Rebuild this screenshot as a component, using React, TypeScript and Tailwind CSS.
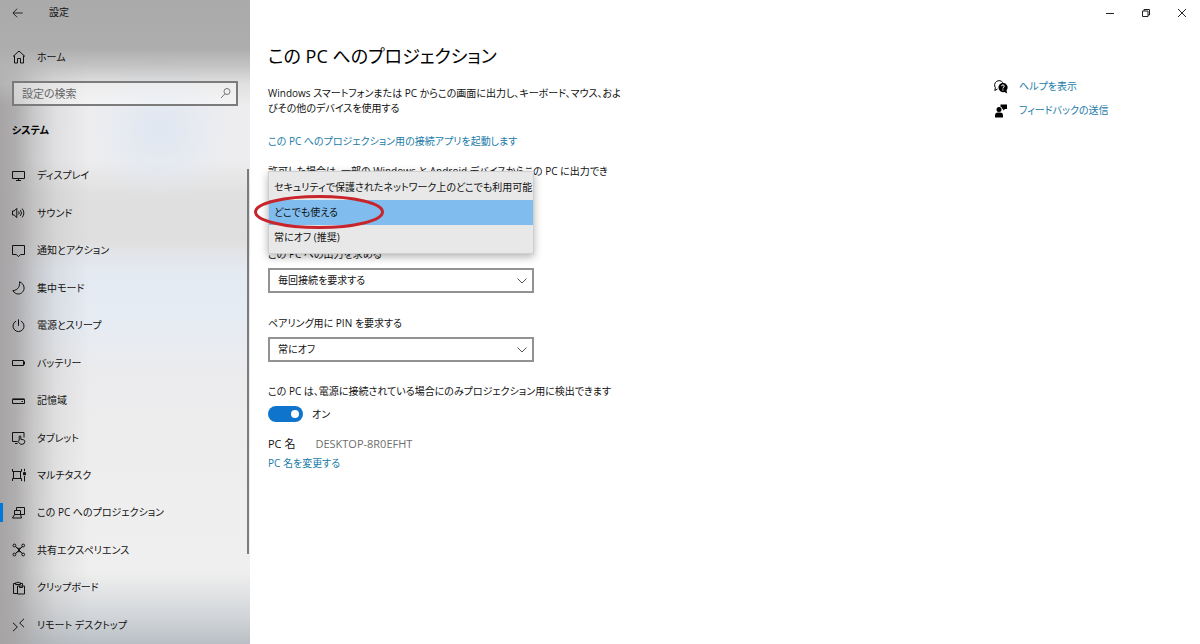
import React, { useState } from 'react';

interface IconProps {
    children: React.ReactNode;
    size?: string;
}

interface NavItem {
    label: string;
    icon: React.ReactNode;
}

const Icon: React.FC<IconProps> = ({ children, size = 'size-3.5' }) => (
    <svg viewBox="0 0 14 14" className={`${size} shrink-0`} fill="none" stroke="currentColor" strokeWidth="1" aria-hidden="true">
        {children}
    </svg>
);

const navItems: NavItem[] = [
    {
        label: 'ディスプレイ',
        icon: <path d="M.5 2.500h12v7H.5zM6.500 9.500v2M4 11.500h5" />,
    },
    {
        label: 'サウンド',
        icon: <path d="M.5 5h1.700l2.600-2.600v9.200L2.200 9H.5zM6.600 5.500q1.200 1.500 0 3M8.400 4.100q2.200 2.900 0 5.800M10.200 2.600q3.300 4.400 0 8.800" />,
    },
    {
        label: '通知とアクション',
        icon: <path d="M.5 1.500h12v9H8.600L6.500 12.700l-2.100-2.200H.5z" />,
    },
    {
        label: '集中モード',
        icon: <path d="M7.500.8c.8 4.200-1.600 8.600-6.700 8.800 1.500 2.200 3.300 3.400 5.300 3.400 3.300 0 6-2.700 6-6 0-2.900-1.900-5.200-4.600-6.200z" />,
    },
    {
        label: '電源とスリープ',
        icon: <path d="M6.500.4v6.400M4.100 2.100a5.500 5.500 0 1 0 4.800 0" />,
    },
    {
        label: 'バッテリー',
        icon: <path d="M.5 4.500h11v5H.5zM12.500 5.500v3" />,
    },
    {
        label: '記憶域',
        icon: <path d="M.5 5.500h12v4H.5zM.5 4.900h12M9.500 7.500h1.500" />,
    },
    {
        label: 'タブレット',
        icon: (
            <>
                <path d="M5.500 10.500h-5v-9h11.500v5M3 12.500h2.500" />
                <path d="M7.200 9.500V5.300q.8-1 1.600 0v3l3 .6q1.200.3 1 1.600-.2 2.700-2.600 2.800H8.800q-1.300-.3-2.700-2.800.3-1 1.100-1z" />
            </>
        ),
    },
    {
        label: 'マルチタスク',
        icon: (
            <>
                <path d="M1.500 3.500h7v7h-7zM.5 1v2.500h9V1M.5 13v-2.500h9V13" />
                <path d="M12.500.8v2.500M12.500 8v5.500" />
                <path d="M11.500 4.600h2v2.200h-2z" fill="currentColor" />
            </>
        ),
    },
    {
        label: 'この PC へのプロジェクション',
        icon: <path d="M4.500 4.500v-3h8v7h-4M2.500 4.500h6v4h-6zM2.500 8.500l-2 3.500h9L8.500 8.500" />,
    },
    {
        label: '共有エクスペリエンス',
        icon: (
            <>
                <path d="M3.500 3.500q3.500 4 7 0M3.500 10.500q3.500-4 7 0M4 3.800l6 6.400M10 3.800l-6 6.400" />
                <circle cx="2.400" cy="2.500" r="1.400" />
                <circle cx="11.200" cy="2.500" r="1.400" />
                <circle cx="2.400" cy="11.500" r="1.400" />
                <circle cx="11.200" cy="11.500" r="1.400" />
            </>
        ),
    },
    {
        label: 'クリップボード',
        icon: <path d="M5.500 12.500h-4v-10h2M8.500 2.500h2v2M3.500 3.500V1.800h1.300q1.200-1.600 2.400 0h1.300v1.700zM5.500 5h7v8h-7zM7.500 5v1.500h3V5" />,
    },
    {
        label: 'リモート デスクトップ',
        icon: <path d="M1 4.800l4.300 4.200L1 13.200M12 .8L7.700 5 12 9.200" />,
    },
];

const projectionOptions = ['セキュリティで保護されたネットワーク上のどこでも利用可能', 'どこでも使える', '常にオフ (推奨)'];

const SelectBox: React.FC<{ id: string; label: string; value: string }> = ({ id, label, value }) => (
    <div>
        <label htmlFor={id} className="block whitespace-nowrap">{label}</label>
        <div className="relative mt-1.5">
            <select id={id} className="block h-[25px] w-full appearance-none border-2 border-[#929292] bg-white pl-2 pr-6">
                <option>{value}</option>
            </select>
            <svg viewBox="0 0 10 6" className="pointer-events-none absolute right-[7px] top-[10px] h-1.5 w-2.5" fill="none" stroke="#555" aria-hidden="true">
                <path d="M.5.5L5 5 9.5.5" />
            </svg>
        </div>
    </div>
);

const Sidebar: React.FC = () => (
    <aside className="flex w-[250px] shrink-0 flex-col bg-[linear-gradient(to_bottom,#aaaaaa_0,#adadad_48px,#b6b6b6cc_64px,#cccccc60_84px,#d8d8d800_105px),linear-gradient(to_right,#a6a4a5_0,#a6a4a5dd_16px,#a6a4a580_34px,#a6a4a530_56px,#a6a4a500_90px),linear-gradient(to_top,#b9bfc5_0,#c4c9cec0_24px,#dcdcde00_72px),radial-gradient(circle_at_160px_130px,#dfe7f2_0,#dfe7f200_70px),linear-gradient(to_bottom,#ececee_0,#ededef_160px,#e0e0e0_195px,#e0dfdf_240px,#e4eaf2_270px,#e6ecf3_320px,#ebebed_370px,#eeeeee_480px,#f0f0f0_100%)]">
        <header className="flex h-[25px] items-center">
            <button type="button" aria-label="戻る" className="flex w-9 justify-center">
                <Icon size="size-3">
                    <path d="M12.5 7H1.2M6 2L1.1 7 6 12" />
                </Icon>
            </button>
            <span className="ml-[13px]">設定</span>
        </header>
        <a href="#home" className="mt-5 flex h-6 items-center gap-[11px] pl-3">
            <Icon>
                <path d="M1 6.500L7 1l6 5.500M2.500 5.500v7.500h3V8.500h3V13h3V5.500" />
            </Icon>
            ホーム
        </a>
        <div className="relative mx-3 mt-3">
            <input
                type="search"
                aria-label="設定の検索"
                placeholder="設定の検索"
                className="block h-[25px] w-full border-2 border-[#7b7b7b] bg-white/40 pl-2 pr-7 text-[11px] placeholder:text-[#666]"
            />
            <svg viewBox="0 0 12 12" className="pointer-events-none absolute right-1.5 top-1.5 size-3" fill="none" stroke="#777" aria-hidden="true">
                <circle cx="7" cy="4.500" r="3" />
                <path d="M5 6.800L1 11" />
            </svg>
        </div>
        <h2 className="mt-[17px] pl-3 font-bold text-black">システム</h2>
        <nav className="relative mt-[19px] flex flex-1 flex-col">
            {navItems.map((item, index) => (
                <a key={item.label} href={`#page-${index}`} className="flex min-h-9 flex-1 items-center">
                    <span className={`mr-[9px] h-[19px] w-[3px] ${index === 9 ? 'bg-[#0078d7]' : ''}`} />
                    <Icon>{item.icon}</Icon>
                    <span className="ml-[11px]">{item.label}</span>
                </a>
            ))}
            <div className="absolute right-px top-3 h-[79%] w-0.5 bg-[#7c7c7c]" />
        </nav>
    </aside>
);

const ProjectionDropdown: React.FC = () => {
    const [selected, setSelected] = useState(1);

    return (
        <div className="relative mt-[21px] h-[25px]">
            <div role="listbox" aria-label="出力の許可" className="absolute -top-[29px] left-0 w-full border border-[#cfcfcf] bg-[#e8e8e8] py-[3px] shadow-[0_3px_8px_rgba(0,0,0,0.3)]">
                {projectionOptions.map((option, index) => (
                    <button
                        key={option}
                        type="button"
                        role="option"
                        aria-selected={index === selected}
                        onClick={() => setSelected(index)}
                        className={`relative block h-[25px] w-full whitespace-nowrap pl-[5px] text-left ${index === selected ? 'bg-[#80bdee]' : ''}`}
                    >
                        {option}
                        {index === selected && (
                            <svg viewBox="0 0 130 34" className="pointer-events-none absolute -left-[15px] -top-[5px] h-[34px] w-[130px]" fill="none" aria-hidden="true">
                                <ellipse cx="65" cy="17" rx="63.5" ry="15.5" stroke="#c8242c" strokeWidth="3" />
                            </svg>
                        )}
                    </button>
                ))}
            </div>
        </div>
    );
};

const App: React.FC = () => {
    const [discoverable, setDiscoverable] = useState(true);

    return (
        <div className="flex min-h-screen bg-white font-['Open_Sans','Noto_Sans_CJK_JP',sans-serif] text-[10px] leading-[15px] text-[#111] [font-feature-settings:'palt']">
            <Sidebar />
            <main className="min-w-0 flex-1">
                <div className="flex h-[25px] justify-end">
                    <button type="button" aria-label="最小化" className="flex w-9 items-center justify-center">
                        <svg viewBox="0 0 8 8" className="size-2" stroke="#222" aria-hidden="true"><path d="M0 4.5h8" /></svg>
                    </button>
                    <button type="button" aria-label="元に戻す" className="flex w-9 items-center justify-center">
                        <svg viewBox="0 0 8 8" className="size-2" fill="none" stroke="#222" aria-hidden="true"><path d="M.5 2h5.5v5.5H.5zM2 2V.5h5.5V6H6" /></svg>
                    </button>
                    <button type="button" aria-label="閉じる" className="flex w-9 items-center justify-center">
                        <svg viewBox="0 0 8 8" className="size-2" stroke="#222" aria-hidden="true"><path d="M0 0l8 8M8 0L0 8" /></svg>
                    </button>
                </div>
                <div className="flex justify-between pl-[18px]">
                    <section className="w-[350px] pt-[15px]">
                        <h1 className="whitespace-nowrap text-lg leading-8 text-black">この PC へのプロジェクション</h1>
                        <p className="mt-3.5 whitespace-nowrap">
                            Windows スマートフォンまたは PC からこの画面に出力し、キーボード、マウス、およ<br />びその他のデバイスを使用する
                        </p>
                        <a href="#connect" className="mt-[18px] block whitespace-nowrap text-[#1a7ba8]">この PC へのプロジェクション用の接続アプリを起動します</a>
                        <p className="mt-[15px] whitespace-nowrap">許可した場合は、一部の Windows と Android デバイスからこの PC に出力でき</p>
                        <div className="w-[266px]">
                            <ProjectionDropdown />
                            <div className="mt-[22px] flex flex-col gap-[23px]">
                                <SelectBox id="ask" label="この PC への出力を求める" value="毎回接続を要求する" />
                                <SelectBox id="pin" label="ペアリング用に PIN を要求する" value="常にオフ" />
                            </div>
                        </div>
                        <p id="discover" className="mt-[22px] whitespace-nowrap">この PC は、電源に接続されている場合にのみプロジェクション用に検出できます</p>
                        <label className="mt-[7px] flex h-4 items-center gap-[9px]">
                            <input
                                type="checkbox"
                                role="switch"
                                aria-describedby="discover"
                                checked={discoverable}
                                onChange={(e) => setDiscoverable(e.target.checked)}
                                className="h-4 w-[35px] appearance-none rounded-full bg-[#8a8a8a] p-1 before:block before:size-2 before:rounded-full before:bg-white checked:bg-[#0f74cc] checked:before:ml-auto"
                            />
                            {discoverable ? 'オン' : 'オフ'}
                        </label>
                        <p className="mt-3.5 flex gap-5 text-[11px]">
                            <span>PC 名</span>
                            <span className="text-[#6e6e6e]">DESKTOP-8R0EFHT</span>
                        </p>
                        <a href="#rename" className="mt-[5px] inline-block text-[#1a7ba8]">PC 名を変更する</a>
                    </section>
                    <aside className="flex w-[206px] shrink-0 flex-col gap-[9px] pt-[54px]">
                        <a href="#help" className="flex items-center gap-[11px] text-[#1a7ba8]">
                            <svg viewBox="0 0 14 14" className="size-3.5 text-black" aria-hidden="true">
                                <path d="M3.500 9L.8 10.500l.6-2.800A4.200 4.200 0 1 1 8.800 2.600" fill="none" stroke="currentColor" />
                                <path d="M9 2.800a4.700 4.700 0 1 0 1.500 9.200l2.700 1.500-.7-3A4.700 4.700 0 0 0 9 2.800z" fill="currentColor" />
                                <path d="M7.500 6.200q.2-1.300 1.400-1.300 1.400.1 1.400 1.300 0 .8-1.400 1.600v.7M8.900 9.400v1.100" fill="none" stroke="white" />
                            </svg>
                            ヘルプを表示
                        </a>
                        <a href="#feedback" className="flex items-center gap-[11px] text-[#1a7ba8]">
                            <svg viewBox="0 0 14 14" className="size-3.5 text-black" fill="currentColor" aria-hidden="true">
                                <circle cx="5" cy="5.500" r="2.500" />
                                <path d="M1 13.500v-2q0-3 3-3h2q3 0 3 3v2zM6.500.500h6.500v4.500h-2l-1.800 1.700V5h-.8Q8.200 3.300 6.500 2.800z" />
                            </svg>
                            フィードバックの送信
                        </a>
                    </aside>
                </div>
            </main>
        </div>
    );
};

export default App;
